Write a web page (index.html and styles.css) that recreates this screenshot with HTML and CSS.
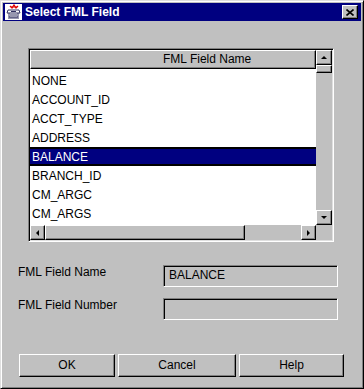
FILE: index.html
```html
<!DOCTYPE html>
<html lang="en">

<head>
  <meta charset="UTF-8">
  <meta name="viewport" content="width=device-width, initial-scale=1.0">
  <title>Select FML Field</title>
  <link rel="stylesheet" href="styles.css">
</head>

<body>
  <div class="window">
    <div class="titlebar">
      <svg class="app-icon" width="17" height="16" viewBox="0 0 17 16">
        <rect x="0" y="0" width="17" height="16" fill="#fff" />
        <path d="M5 2 L7 4 L9 1 L11 4 L13 2" stroke="#e00000" stroke-width="1.3" fill="none" />
        <path d="M6 3 H12" stroke="#e00000" stroke-width="1" />
        <path d="M3 6 H14 L15 9 H2 Z" fill="#fff" stroke="#303060" stroke-width="1" />
        <path d="M4 9 V13 H13 V9" fill="none" stroke="#303060" stroke-width="1" />
        <path d="M5 11 H12 M3 14 H14" stroke="#303060" stroke-width="1" />
        <rect x="6" y="7" width="5" height="1" fill="#303060" />
      </svg>
      <span class="title">Select FML Field</span>
      <div class="close-btn raised">
        <svg width="8" height="7" viewBox="0 0 8 7">
          <path d="M0.5 0.5 L7.5 6.5 M7.5 0.5 L0.5 6.5" stroke="#000" stroke-width="1.6" />
        </svg>
      </div>
    </div>

    <div class="content">
      <div class="scroll-pane">
        <div class="viewport">
          <div class="table-header raised"><span>FML Field Name</span></div>
          <ul class="field-list">
            <li>NONE</li>
            <li>ACCOUNT_ID</li>
            <li>ACCT_TYPE</li>
            <li>ADDRESS</li>
            <li class="selected">BALANCE</li>
            <li>BRANCH_ID</li>
            <li>CM_ARGC</li>
            <li>CM_ARGS</li>
          </ul>
        </div>
        <div class="vscroll">
          <div class="arrow-btn raised"><i class="tri up"></i></div>
          <div class="vthumb raised"></div>
          <div class="track"></div>
          <div class="arrow-btn raised"><i class="tri down"></i></div>
        </div>
        <div class="hscroll">
          <div class="arrow-btn raised"><i class="tri left"></i></div>
          <div class="hthumb raised"></div>
          <div class="track"></div>
          <div class="arrow-btn raised"><i class="tri right"></i></div>
        </div>
        <div class="corner"></div>
      </div>

      <div class="form-row first">
        <label>FML Field Name</label>
        <div class="text-field">BALANCE</div>
      </div>
      <div class="form-row">
        <label>FML Field Number</label>
        <div class="text-field"></div>
      </div>

      <div class="button-row">
        <div class="btn raised ok">OK</div>
        <div class="btn raised cancel">Cancel</div>
        <div class="btn raised help">Help</div>
      </div>
    </div>
  </div>
</body>

</html>
```

FILE: styles.css
```css
* {
  box-sizing: border-box;
}

body {
  margin: 0;
  background-color: #c0c0c0;
  font-family: "Liberation Sans", Arial, sans-serif;
  font-size: 12px;
  color: #000;
}

.raised {
  border: 1px solid;
  border-color: #fff #000 #000 #fff;
  box-shadow: inset -1px -1px #808080;
  background-color: #c0c0c0;
}

.window {
  display: flex;
  flex-direction: column;
  width: 364px;
  height: 389px;
  padding: 2px;
  border: 1px solid;
  border-color: #dfdfdf #000 #000 #dfdfdf;
  box-shadow: inset 1px 1px #fff, inset -1px -1px #808080;
  background-color: #c0c0c0;
}

.titlebar {
  display: flex;
  align-items: center;
  height: 18px;
  padding: 0 3px 0 2px;
  background-color: #000080;
}

.app-icon {
  margin-right: 3px;
}

.title {
  color: #fff;
  font-weight: bold;
  font-size: 12px;
}

.close-btn {
  display: flex;
  justify-content: center;
  align-items: center;
  margin-left: auto;
  width: 16px;
  height: 14px;
}

.content {
  display: flex;
  flex-direction: column;
  flex: 1;
}

/* table + scrollbars */
.scroll-pane {
  display: grid;
  grid-template-columns: 286px 16px;
  grid-template-rows: 175px 15px;
  margin: 27px 0 0 25px;
  width: 306px;
  height: 194px;
  padding: 1px;
  border: 1px solid;
  border-color: #808080 #fff #fff #808080;
  box-shadow: inset 1px 1px #000, inset -1px -1px #dfdfdf;
}

.viewport {
  overflow: hidden;
  background-color: #fff;
}

.table-header {
  height: 19px;
  padding-left: 132px;
  line-height: 17px;
  border-bottom-color: #000;
  white-space: nowrap;
}

.field-list {
  margin: 0;
  padding: 2px 0 0;
  list-style: none;
}

.field-list li {
  height: 19px;
  padding-left: 2px;
  line-height: 20px;
  white-space: nowrap;
}

.field-list .selected {
  border-top: 2px solid #000;
  border-bottom: 2px solid #000;
  background-color: #000080;
  color: #fff;
  line-height: 16px;
}

.vscroll {
  display: flex;
  flex-direction: column;
}

.hscroll {
  display: flex;
}

.track {
  flex: 1;
  background-color: #c0c0c0;
}

.corner {
  background-color: #c0c0c0;
}

.arrow-btn {
  display: flex;
  justify-content: center;
  align-items: center;
  width: 16px;
  height: 15px;
}

.hscroll .arrow-btn {
  width: 15px;
}

.vthumb {
  height: 8px;
}

.hthumb {
  width: 200px;
}

.tri {
  width: 0;
  height: 0;
  border: 3px solid transparent;
}

.tri.up {
  border-top-width: 0;
  border-bottom-color: #000;
}

.tri.down {
  border-bottom-width: 0;
  border-top-color: #000;
}

.tri.left {
  border-left-width: 0;
  border-right-color: #000;
}

.tri.right {
  border-right-width: 0;
  border-left-color: #000;
}

/* form fields */
.form-row {
  display: flex;
  align-items: flex-start;
  margin: 11px 0 0 15px;
}

.form-row.first {
  margin-top: 23px;
}

.form-row label {
  width: 145px;
  line-height: 14px;
}

.text-field {
  width: 175px;
  height: 22px;
  padding-left: 5px;
  line-height: 19px;
  border: 1px solid;
  border-color: #808080 #fff #fff #808080;
  box-shadow: inset 1px 1px #000;
}

/* buttons */
.button-row {
  display: flex;
  gap: 3px;
  margin: 34px 0 0 16px;
}

.btn {
  height: 23px;
  line-height: 21px;
  text-align: center;
}

.ok {
  width: 96px;
}

.cancel {
  width: 118px;
}

.help {
  width: 105px;
}
```
